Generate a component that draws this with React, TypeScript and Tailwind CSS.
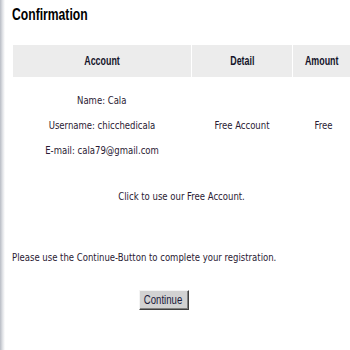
import React from "react";

export default function App() {
  const bodyFont = "font-['DejaVu_Sans_Condensed','DejaVu_Sans',sans-serif] text-[11px] text-[#2a1a33]";
  const sq = "inline-block scale-x-[0.86] whitespace-nowrap";
  const head = "font-['Liberation_Sans','Arial',sans-serif] font-bold text-[12px] text-[#14142a]";
  const hsq = "inline-block scale-x-[0.74] whitespace-nowrap";
  return (
    <div className="relative w-[350px] h-[350px] bg-white overflow-hidden">
      <div className="absolute left-0 top-0 h-full w-[5px] bg-gradient-to-r from-[#b8bcc4] via-[#dfe1e5] to-white" />
      <div className="pl-[13px]">
        <h1 className="pt-[6px] h-[45px] font-['Liberation_Sans','Arial',sans-serif] font-bold text-[16px] leading-[18px] text-black">
          <span className="inline-block origin-left scale-x-[0.76] -ml-px">Confirmation</span>
        </h1>
        <div className="grid grid-cols-[178px_100px_1fr] gap-x-px">
          <div className={`h-[32px] bg-[#ececec] flex items-center justify-center ${head}`}><span className={hsq}>Account</span></div>
          <div className={`h-[32px] bg-[#ececec] flex items-center justify-center ${head}`}><span className={hsq}>Detail</span></div>
          <div className={`h-[32px] bg-[#ececec] flex items-center justify-center ${head}`}><span className={hsq}>Amount</span></div>
          <div className={`pt-[12px] flex flex-col items-center ${bodyFont}`}>
            <div className="h-[25px] flex items-center"><span className={sq}>Name: Cala</span></div>
            <div className="h-[25px] flex items-center"><span className={sq}>Username: chicchedicala</span></div>
            <div className="h-[25px] flex items-center"><span className={sq}>E-mail: cala79@gmail.com</span></div>
          </div>
          <div className={`pt-[12px] flex items-center justify-center ${bodyFont}`}><span className={sq}>Free Account</span></div>
          <div className={`pt-[12px] flex items-center justify-center pl-[3px] ${bodyFont}`}><span className={sq}>Free</span></div>
        </div>
        <div className={`mt-[27px] h-[12px] flex items-center justify-center ${bodyFont}`}>
          <span className={sq}>Click to use our Free Account.</span>
        </div>
        <div className={`mt-[49px] h-[12px] flex items-center ${bodyFont}`}>
          <span className={`${sq} origin-left -ml-px`}>Please use the Continue-Button to complete your registration.</span>
        </div>
        <div className="flex justify-center mt-[26px] pr-[36px]">
          <button className="w-[50px] h-[20px] bg-[#d2d2d2] border border-t-[#f4f4f4] border-l-[#f4f4f4] border-r-[#404040] border-b-[#404040] shadow-[inset_-1px_-1px_0_#808080] font-['Liberation_Sans','Arial',sans-serif] text-[12px] text-[#1a1a3a] leading-none flex items-center justify-center">
            <span className="inline-block scale-x-[0.8] whitespace-nowrap">Continue</span>
          </button>
        </div>
      </div>
    </div>
  );
}
